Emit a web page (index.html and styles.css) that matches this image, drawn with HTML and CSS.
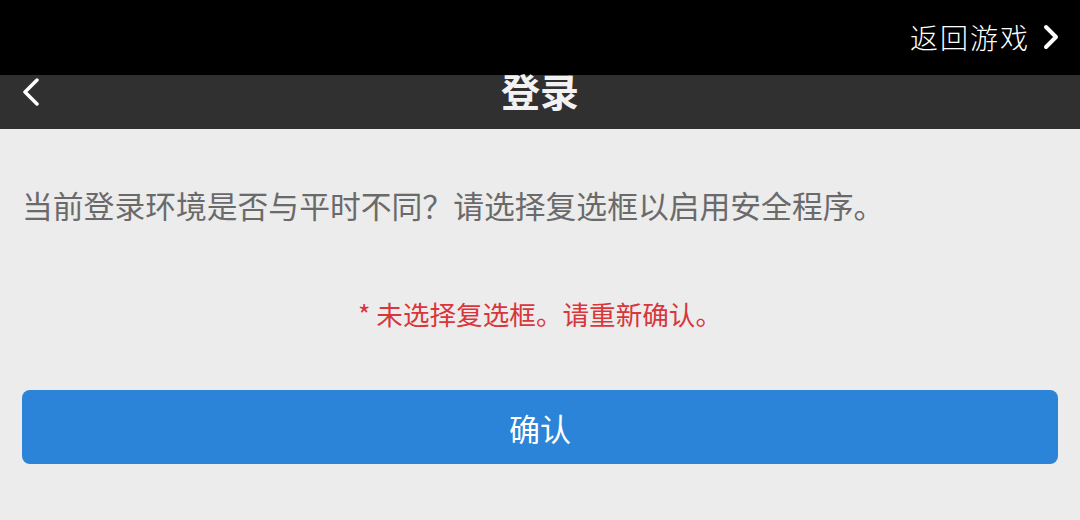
FILE: index.html
```html
<!DOCTYPE html>
<html lang="zh-CN">
<head>
    <meta charset="UTF-8">
    <meta name="viewport" content="width=device-width, initial-scale=1.0">
    <title>登录</title>
    <link rel="stylesheet" href="styles.css">
</head>
<body>
    <div class="game-bar">
        <a class="back-game">
            <span>返回游戏</span>
            <svg width="18" height="26" viewBox="0 0 18 26"><path d="M4 3 L14 13 L4 23" fill="none" stroke="#fff" stroke-width="4" stroke-linecap="round" stroke-linejoin="round"/></svg>
        </a>
    </div>
    <div class="nav-header">
        <button class="nav-back">
            <svg width="20" height="28" viewBox="0 0 20 28"><path d="M16 2 L4 14 L16 26" fill="none" stroke="#fff" stroke-width="3.5" stroke-linecap="round" stroke-linejoin="round"/></svg>
        </button>
        <h1 class="nav-title">登录</h1>
    </div>
    <div class="content">
        <p class="notice">当前登录环境是否与平时不同？请选择复选框以启用安全程序。</p>
        <p class="error">* 未选择复选框。请重新确认。</p>
        <button class="confirm-btn">确认</button>
    </div>
</body>
</html>
```

FILE: styles.css
```css
:root {
    --bar-black: #000000;
    --header-dark: #303030;
    --page-bg: #ececec;
    --text-gray: #6a6a6a;
    --error-red: #d9363c;
    --primary-blue: #2b84d8;
}

body, html {
    margin: 0;
    padding: 0;
    height: 100%;
    font-family: "Noto Sans CJK SC", "Noto Sans", sans-serif;
    background: var(--page-bg);
    overflow: hidden;
}

.game-bar {
    height: 75px;
    background: var(--bar-black);
    display: flex;
    justify-content: flex-end;
    align-items: center;
    padding: 0 20px;
    box-sizing: border-box;
}

.back-game {
    display: flex;
    align-items: center;
    gap: 12px;
    color: #fff;
    font-size: 28px;
    font-weight: 300;
    letter-spacing: 2px;
    line-height: 1;
    margin-top: -2px;
}

.nav-header {
    height: 54px;
    background: var(--header-dark);
    position: relative;
    display: flex;
    justify-content: center;
}

.nav-back {
    position: absolute;
    left: 16px;
    top: 2px;
    background: none;
    border: none;
    padding: 0;
    width: 30px;
    height: 30px;
    display: flex;
    align-items: center;
    justify-content: center;
}

.nav-title {
    margin: 0;
    margin-top: -4px;
    color: #f2f2f2;
    font-size: 39px;
    font-weight: 700;
    line-height: 39px;
}

.content {
    padding: 0 22px;
}

.notice {
    margin: 0;
    padding-top: 56px;
    font-size: 30.8px;
    line-height: 40px;
    color: var(--text-gray);
}

.error {
    margin: 0;
    padding-top: 72px;
    text-align: center;
    font-size: 26.6px;
    line-height: 34px;
    color: var(--error-red);
}

.confirm-btn {
    display: block;
    width: 100%;
    height: 74px;
    margin-top: 59px;
    border: none;
    border-radius: 8px;
    background: var(--primary-blue);
    color: #fff;
    font-family: inherit;
    font-size: 31px;
}
```
